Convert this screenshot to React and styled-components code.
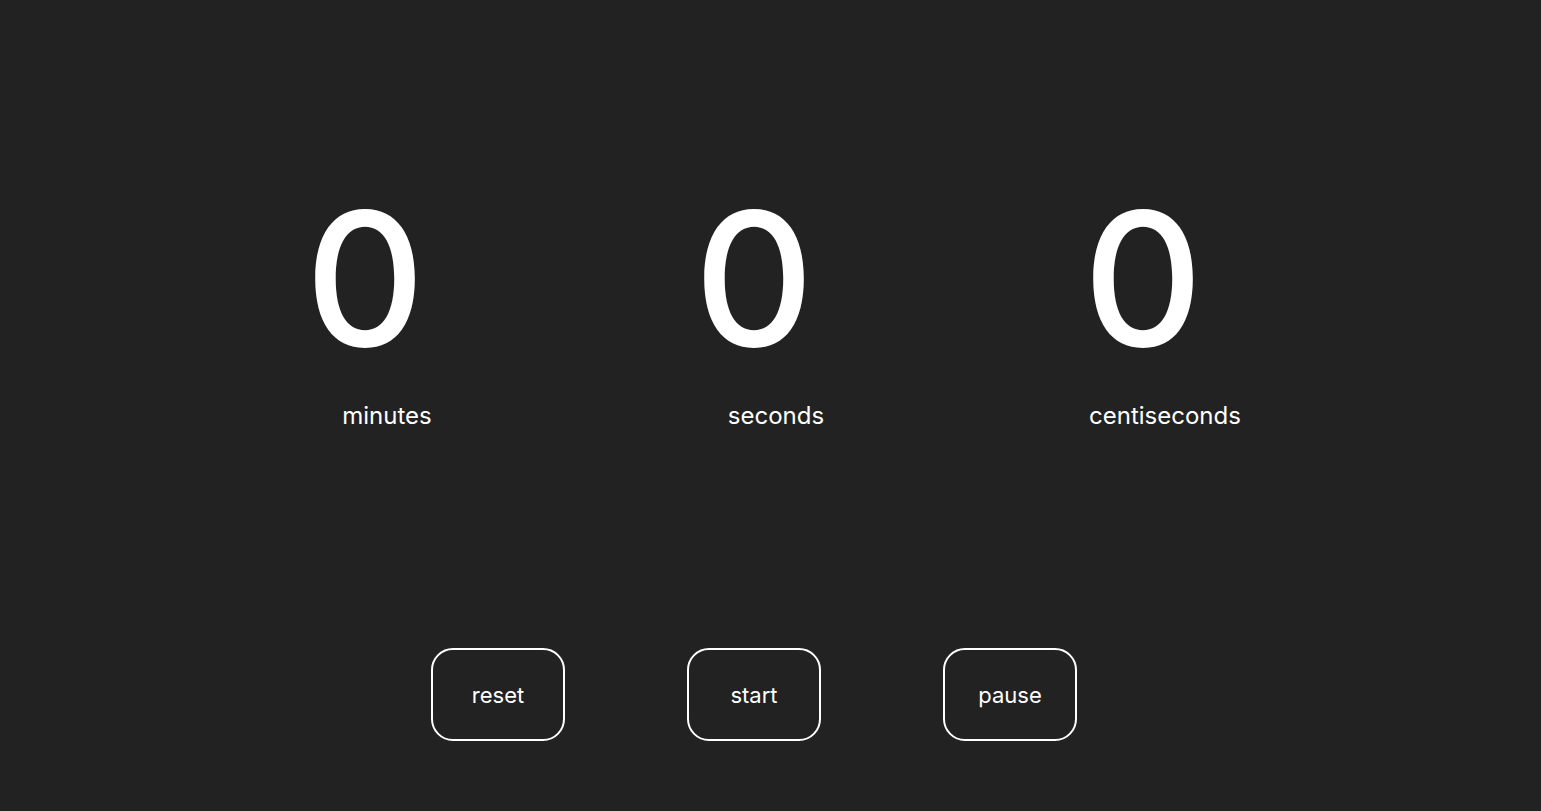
import styled, { createGlobalStyle } from "styled-components";

const GlobalStyle = createGlobalStyle`
  html, body {
    margin: 0;
    padding: 0;
    background: #222222;
    color: #ffffff;
    font-family: "Inter", "Noto Sans", sans-serif;
  }
`;

const Page = styled.div`
  width: 1508px;
  height: 811px;
  display: flex;
  flex-direction: column;
  align-items: center;
  overflow: hidden;
`;

const Display = styled.div`
  display: flex;
  justify-content: center;
  margin-top: 169px;
`;

const Unit = styled.div`
  width: 389px;
  display: flex;
  flex-direction: column;
  align-items: center;
`;

const Digit = styled.div`
  font-size: 186px;
  font-weight: 500;
  line-height: 220px;
  height: 220px;
`;

const Label = styled.div`
  font-size: 24px;
  line-height: 30px;
  margin-top: 12px;
  padding-left: 44px;
`;

const Controls = styled.div`
  display: flex;
  gap: 122px;
  margin-top: 217px;
`;

const Button = styled.button`
  width: 134px;
  height: 93px;
  border: 2.5px solid #ffffff;
  border-radius: 22px;
  background: transparent;
  color: #ffffff;
  font-family: inherit;
  font-size: 22px;
  cursor: pointer;
`;

const units = ["minutes", "seconds", "centiseconds"];

const App = () => {
  return (
    <Page>
      <GlobalStyle />
      <Display>
        {units.map((u) => (
          <Unit key={u}>
            <Digit>0</Digit>
            <Label>{u}</Label>
          </Unit>
        ))}
      </Display>
      <Controls>
        <Button>reset</Button>
        <Button>start</Button>
        <Button>pause</Button>
      </Controls>
    </Page>
  );
};

export default App;
